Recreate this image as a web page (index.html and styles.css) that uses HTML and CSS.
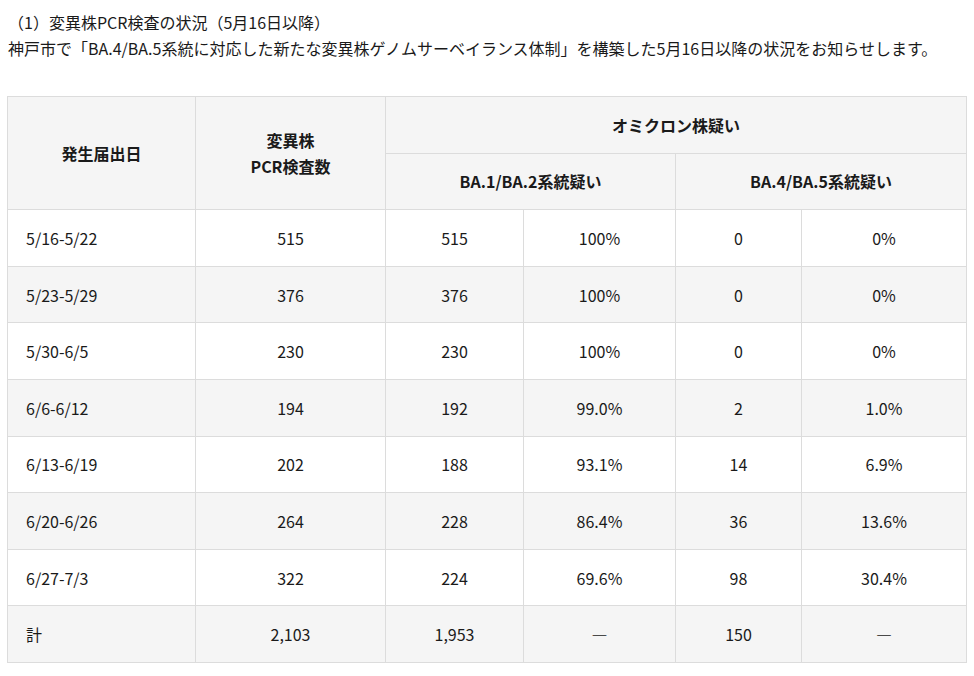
FILE: index.html
```html
<!DOCTYPE html>
<html lang="ja">
<head>
<meta charset="utf-8">
<title>変異株PCR検査の状況</title>
<link rel="stylesheet" href="styles.css">
</head>
<body>
<div class="page">
  <p class="lead">（1）変異株PCR検査の状況（5月16日以降）</p>
  <p class="lead">神戸市で「BA.4/BA.5系統に対応した新たな変異株ゲノムサーベイランス体制」を構築した5月16日以降の状況をお知らせします。</p>
  <table class="data">
    <colgroup>
      <col class="c1"><col class="c2"><col class="c3"><col class="c4"><col class="c5"><col class="c6">
    </colgroup>
    <thead>
      <tr>
        <th rowspan="2">発生届出日</th>
        <th rowspan="2">変異株<br>PCR検査数</th>
        <th colspan="4">オミクロン株疑い</th>
      </tr>
      <tr>
        <th colspan="2">BA.1/BA.2系統疑い</th>
        <th colspan="2">BA.4/BA.5系統疑い</th>
      </tr>
    </thead>
    <tbody>
      <tr><td class="date">5/16-5/22</td><td>515</td><td>515</td><td>100%</td><td>0</td><td>0%</td></tr>
      <tr class="alt"><td class="date">5/23-5/29</td><td>376</td><td>376</td><td>100%</td><td>0</td><td>0%</td></tr>
      <tr><td class="date">5/30-6/5</td><td>230</td><td>230</td><td>100%</td><td>0</td><td>0%</td></tr>
      <tr class="alt"><td class="date">6/6-6/12</td><td>194</td><td>192</td><td>99.0%</td><td>2</td><td>1.0%</td></tr>
      <tr><td class="date">6/13-6/19</td><td>202</td><td>188</td><td>93.1%</td><td>14</td><td>6.9%</td></tr>
      <tr class="alt"><td class="date">6/20-6/26</td><td>264</td><td>228</td><td>86.4%</td><td>36</td><td>13.6%</td></tr>
      <tr><td class="date">6/27-7/3</td><td>322</td><td>224</td><td>69.6%</td><td>98</td><td>30.4%</td></tr>
      <tr class="alt"><td class="date">計</td><td>2,103</td><td>1,953</td><td>―</td><td>150</td><td>―</td></tr>
    </tbody>
  </table>
</div>
</body>
</html>
```
FILE: styles.css
```css
html, body {
  margin: 0;
  padding: 0;
  background: #ffffff;
}

body {
  font-family: "Noto Sans CJK JP", "Noto Sans", sans-serif;
  color: #1a1a1a;
}

.page {
  padding: 9px 8px 0 7px;
}

.lead {
  margin: 0;
  padding-left: 1px;
  font-size: 16px;
  line-height: 26px;
}

.data {
  margin-top: 35px;
  border-collapse: collapse;
  table-layout: fixed;
  width: 959px;
  font-size: 16px;
}

.c1 { width: 188px; }
.c2 { width: 190px; }
.c3 { width: 138px; }
.c4 { width: 152px; }
.c5 { width: 126px; }
.c6 { width: 165px; }

.data th,
.data td {
  border: 1px solid #dcdcdc;
  padding: 0 8px;
  text-align: center;
  vertical-align: middle;
  line-height: 26px;
}

.data tr {
  height: 56.6px;
}

.data th {
  background: #f5f5f5;
  font-weight: bold;
}

.data tr.alt td {
  background: #f5f5f5;
}

.data td.date {
  text-align: left;
  padding-left: 18px;
}
```
